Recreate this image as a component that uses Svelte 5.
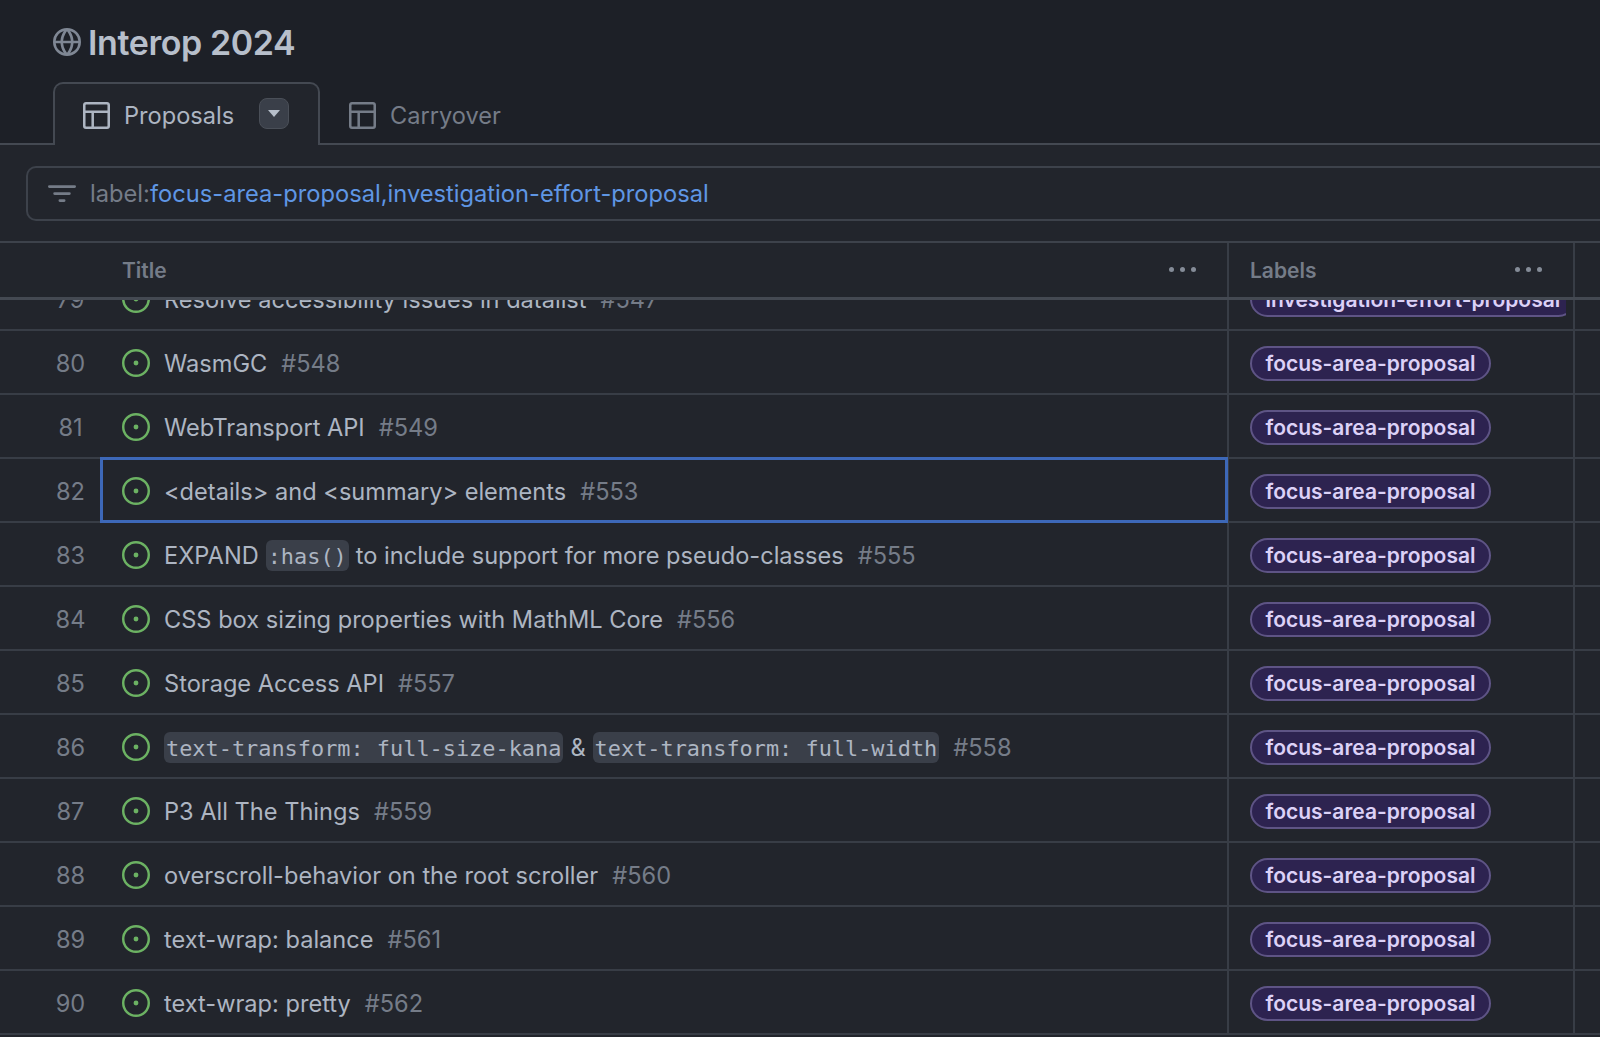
<script lang="ts">
	type Part = { code?: string; text?: string };
	interface Row {
		n: number;
		parts: Part[];
		id: number;
		label?: string;
		focused?: boolean;
	}

	const rows: Row[] = [
		{ n: 79, parts: [{ text: 'Resolve accessibility issues in datalist' }], id: 547, label: 'investigation-effort-proposal' },
		{ n: 80, parts: [{ text: 'WasmGC' }], id: 548 },
		{ n: 81, parts: [{ text: 'WebTransport API' }], id: 549 },
		{ n: 82, parts: [{ text: '<details> and <summary> elements' }], id: 553, focused: true },
		{ n: 83, parts: [{ text: 'EXPAND' }, { code: ':has()' }, { text: 'to include support for more pseudo-classes' }], id: 555 },
		{ n: 84, parts: [{ text: 'CSS box sizing properties with MathML Core' }], id: 556 },
		{ n: 85, parts: [{ text: 'Storage Access API' }], id: 557 },
		{ n: 86, parts: [{ code: 'text-transform: full-size-kana' }, { text: '&' }, { code: 'text-transform: full-width' }], id: 558 },
		{ n: 87, parts: [{ text: 'P3 All The Things' }], id: 559 },
		{ n: 88, parts: [{ text: 'overscroll-behavior on the root scroller' }], id: 560 },
		{ n: 89, parts: [{ text: 'text-wrap: balance' }], id: 561 },
		{ n: 90, parts: [{ text: 'text-wrap: pretty' }], id: 562 }
	];
</script>

{#snippet tableIcon()}
	<svg class="tab-icon" viewBox="0 0 16 16" fill="currentColor">
		<path d="M0 1.75C0 .784.784 0 1.75 0h12.5C15.216 0 16 .784 16 1.75v12.5A1.75 1.75 0 0 1 14.25 16H1.75A1.75 1.75 0 0 1 0 14.25ZM6.5 6.5v8h7.75a.25.25 0 0 0 .25-.25V6.5Zm8-1.5V1.75a.25.25 0 0 0-.25-.25H1.75a.25.25 0 0 0-.25.25V5Zm-13 1.5v7.75c0 .138.112.25.25.25H5v-8Z" />
	</svg>
{/snippet}

{#snippet dots()}
	<span class="dots"><i></i><i></i><i></i></span>
{/snippet}

<div class="page">
	<header class="top">
		<h1>
			<svg class="globe" viewBox="0 0 16 16" fill="currentColor">
				<path d="M8 0a8 8 0 1 1 0 16A8 8 0 0 1 8 0ZM5.78 8.75a9.64 9.64 0 0 0 1.363 4.177c.255.426.542.832.857 1.215.245-.296.551-.705.857-1.215A9.64 9.64 0 0 0 10.22 8.75Zm4.44-1.5a9.64 9.64 0 0 0-1.363-4.177c-.307-.51-.612-.919-.857-1.215a9.927 9.927 0 0 0-.857 1.215A9.64 9.64 0 0 0 5.78 7.25Zm-5.944 1.5H1.543a6.507 6.507 0 0 0 4.666 5.5c-.123-.181-.24-.365-.352-.552-.715-1.192-1.437-2.874-1.581-4.948Zm-2.733-1.5h2.733c.144-2.074.866-3.756 1.58-4.948.12-.197.237-.381.353-.552a6.507 6.507 0 0 0-4.666 5.5Zm10.181 1.5c-.144 2.074-.866 3.756-1.58 4.948-.12.197-.237.381-.353.552a6.507 6.507 0 0 0 4.666-5.5Zm2.733-1.5a6.507 6.507 0 0 0-4.666-5.5c.123.181.24.365.353.552.714 1.192 1.436 2.874 1.58 4.948Z" />
			</svg>
			Interop 2024
		</h1>
		<nav class="tabs">
			<div class="tab active">
				{@render tableIcon()}
				<span>Proposals</span>
				<span class="caret-btn"><span class="caret"></span></span>
			</div>
			<div class="tab">
				{@render tableIcon()}
				<span>Carryover</span>
			</div>
		</nav>
	</header>

	<section class="filter-wrap">
		<div class="filter">
			<svg class="filter-icon" viewBox="0 0 16 16" fill="currentColor">
				<path d="M.75 3h14.5a.75.75 0 0 1 0 1.5H.75a.75.75 0 0 1 0-1.5ZM3 7.75A.75.75 0 0 1 3.75 7h8.5a.75.75 0 0 1 0 1.5h-8.5A.75.75 0 0 1 3 7.75Zm3 4a.75.75 0 0 1 .75-.75h2.5a.75.75 0 0 1 0 1.5h-2.5a.75.75 0 0 1-.75-.75Z" />
			</svg>
			<span class="query">label:<b>focus-area-proposal,investigation-effort-proposal</b></span>
		</div>
	</section>

	<section class="table">
		<div class="grid head">
			<div class="cell"></div>
			<div class="cell title-head"><span>Title</span>{@render dots()}</div>
			<div class="cell labels-head"><span>Labels</span>{@render dots()}</div>
			<div class="cell"></div>
		</div>
		<div class="body">
			{#each rows as row}
				<div class="grid row">
					<div class="cell num">{row.n}</div>
					<div class="cell title" class:focused={row.focused}>
						<svg class="issue" viewBox="0 0 16 16" fill="currentColor">
							<circle cx="8" cy="8" r="1.4" />
							<path d="M8 0a8 8 0 1 1 0 16A8 8 0 0 1 8 0ZM1.4 8a6.6 6.6 0 1 0 13.2 0A6.6 6.6 0 0 0 1.4 8Z" />
						</svg>
						<span class="parts">
							{#each row.parts as part}
								{#if part.code}<code>{part.code}</code>{:else}<span>{part.text}</span>{/if}
							{/each}
							<span class="id">#{row.id}</span>
						</span>
					</div>
					<div class="cell labels">
						<span class="label-clip"><span class="label">{row.label ?? 'focus-area-proposal'}</span></span>
					</div>
					<div class="cell"></div>
				</div>
			{/each}
		</div>
	</section>
</div>

<style>
	:global(body) {
		margin: 0;
		background: #22252c;
	}
	.page {
		height: 1037px;
		overflow: hidden;
		display: flex;
		flex-direction: column;
		font-family: Inter, 'Liberation Sans', sans-serif;
		color: #adb5c2;
		background: #22252c;
	}
	.top {
		height: 145px;
		box-sizing: border-box;
		background: #1d2027;
		border-bottom: 2px solid #444952;
		padding-left: 53px;
		display: flex;
		flex-direction: column;
	}
	h1 {
		margin: 0;
		height: 82px;
		box-sizing: border-box;
		padding-top: 2px;
		display: flex;
		align-items: center;
		gap: 7px;
		font-size: 34px;
		font-weight: 600;
		letter-spacing: -0.4px;
		color: #b7bfcb;
	}
	.globe {
		width: 28px;
		height: 28px;
		color: #7f8794;
	}
	.tabs {
		display: flex;
		height: 61px;
	}
	.tab {
		display: flex;
		align-items: center;
		gap: 14px;
		padding: 5px 28px 0 29px;
		height: 61px;
		box-sizing: border-box;
		font-size: 23.6px;
		color: #757c88;
	}
	.tab.active {
		width: 267px;
		height: 63px;
		background: #22252c;
		border: 2px solid #444952;
		border-bottom: none;
		border-radius: 10px 10px 0 0;
		color: #adb5c2;
		padding: 3px 28px 2px 28px;
		position: relative;
		z-index: 1;
	}
	.tab-icon {
		width: 27px;
		height: 27px;
		flex: none;
	}
	.caret-btn {
		width: 30px;
		height: 31px;
		flex: none;
		border-radius: 8px;
		background: #3a3f49;
		border: 1px solid #4a4f58;
		box-sizing: border-box;
		margin-left: 11px;
		margin-top: -4px;
		display: grid;
		place-items: center;
	}
	.caret {
		width: 0;
		height: 0;
		border-left: 6px solid transparent;
		border-right: 6px solid transparent;
		border-top: 7px solid #b7bfcb;
	}
	.filter-wrap {
		height: 98px;
		box-sizing: border-box;
		padding: 21px 0 0 26px;
		border-bottom: 2px solid #3d424b;
	}
	.filter {
		height: 55px;
		box-sizing: border-box;
		border: 2px solid #3d424b;
		border-right: none;
		border-radius: 10px 0 0 10px;
		display: flex;
		align-items: center;
		padding-left: 20px;
		gap: 14px;
		font-size: 23.7px;
		color: #757c88;
	}
	.filter-icon {
		width: 28px;
		height: 28px;
		color: #757c88;
	}
	.query b {
		font-weight: 400;
		color: #5f96e4;
	}
	.table {
		flex: 1;
		min-height: 0;
		display: flex;
		flex-direction: column;
	}
	.grid {
		display: grid;
		grid-template-columns: 101px 1126px 348px 1fr;
	}
	.head {
		height: 57px;
		box-sizing: border-box;
		border-bottom: 3px solid #444952;
		font-size: 21px;
		font-weight: 600;
		color: #757c88;
		position: relative;
		z-index: 2;
		background: #22252c;
	}
	.head .cell {
		display: flex;
		align-items: center;
		justify-content: space-between;
		padding-top: 1px;
	}
	.title-head {
		padding: 0 31px 0 21px;
	}
	.labels-head {
		padding: 0 31px 0 21px;
		border-left: 2px solid #383d46;
		border-right: 2px solid #383d46;
	}
	.dots {
		display: flex;
		gap: 6px;
		margin-top: -3px;
	}
	.dots i {
		width: 5px;
		height: 5px;
		border-radius: 50%;
		background: #858c98;
	}
	.body {
		flex: 1;
		min-height: 0;
		overflow: hidden;
	}
	.row {
		height: 64px;
		box-sizing: border-box;
		border-bottom: 2px solid #383d46;
	}
	.row:first-child {
		margin-top: -33px;
	}
	.row .cell {
		display: flex;
		align-items: center;
		min-width: 0;
	}
	.num {
		justify-content: center;
		font-size: 23.6px;
		color: #757c88;
		padding: 2px 0 0 40px;
	}
	.title {
		padding: 2px 0 0 21px;
		gap: 14px;
		font-size: 23.6px;
		white-space: nowrap;
	}
	.title.focused {
		position: relative;
		z-index: 1;
		outline: 3px solid #3d68b8;
		outline-offset: -3px;
		margin: -2px -1px -2px -1px;
		padding-left: 22px;
	}
	.issue {
		width: 28px;
		height: 28px;
		flex: none;
		color: #6cb263;
	}
	.parts {
		display: flex;
		align-items: center;
		gap: 7px;
	}
	.id {
		color: #757c88;
		margin-left: 7px;
	}
	code {
		font-family: 'DejaVu Sans Mono', 'Liberation Mono', monospace;
		font-size: 21.9px;
		background: #3a3f49;
		border-radius: 6px;
		padding: 2px 2px 0;
		line-height: 29px;
		color: #adb5c2;
	}
	.labels {
		padding: 2px 0 0 21px;
		border-left: 2px solid #383d46;
		border-right: 2px solid #383d46;
	}
	.label-clip {
		display: flex;
		width: 316px;
		overflow: hidden;
	}
	.label {
		box-sizing: border-box;
		flex: none;
		height: 35px;
		padding: 0 13.5px;
		display: inline-flex;
		align-items: center;
		border: 2px solid #5e5485;
		border-radius: 18px;
		background: #2d2350;
		color: #dcd1f7;
		font-size: 21px;
		font-weight: 600;
		white-space: nowrap;
	}
</style>
